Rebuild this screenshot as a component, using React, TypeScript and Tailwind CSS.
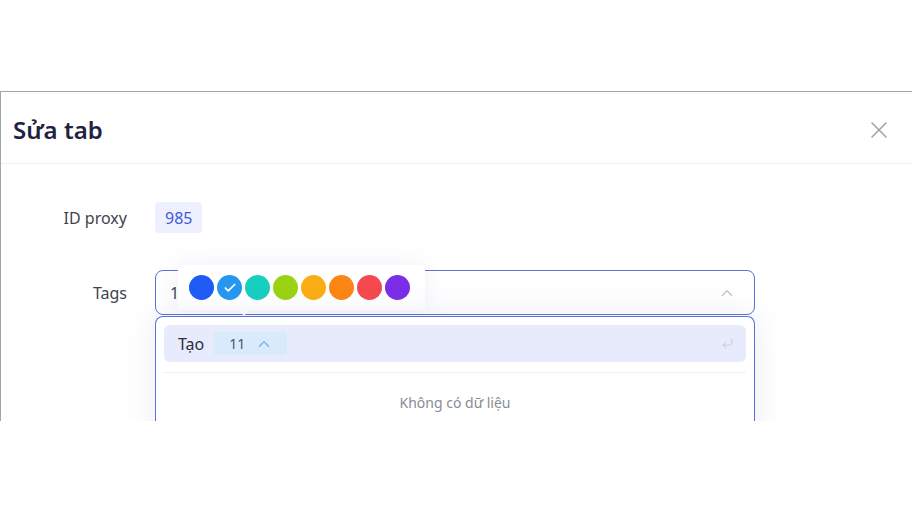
import { Check, ChevronUp, CornerDownLeft, X } from "lucide-react";

const colors = [
  "#1f5bf5",
  "#2697f0",
  "#16cfbf",
  "#9bd214",
  "#fbad15",
  "#fb8613",
  "#f5494f",
  "#7b2ee8",
];

export default function App() {
  return (
    <div
      className="h-[513px] w-[912px] overflow-hidden bg-white"
      style={{ fontFamily: '"Noto Sans", "Open Sans", sans-serif' }}
    >
      <div className="mt-[91px] h-[330px] overflow-hidden border-l border-t border-[#a6a6a6]">
        {/* header */}
        <div className="flex h-[72px] items-center justify-between border-b border-[#f0f0f2] pl-[12px] pr-[19px] pt-[5px]">
          <h2 className="text-[24px] font-semibold text-[#1e2340]">Sửa tab</h2>
          <X size={28} strokeWidth={1.3} className="text-[#a3a3a3]" />
        </div>

        {/* body */}
        <div className="flex flex-col gap-[37px] pt-[38px]">
          <div className="flex items-center">
            <div className="w-[126px] text-right text-[16px] text-[#3f4250]">ID proxy</div>
            <div className="ml-[28px] flex h-[31px] items-center rounded-[4px] bg-[#eef0fd] px-[10px] text-[16px] text-[#3d5bd9]">
              985
            </div>
          </div>

          <div className="flex items-center">
            <div className="w-[126px] text-right text-[16px] text-[#3f4250]">Tags</div>
            <div className="relative ml-[28px] w-[600px]">
              <div className="flex h-[45px] items-center justify-between rounded-[8px] border-[1.5px] border-[#5b70dc] bg-white pl-[14px] pr-[18px]">
                <span className="text-[16px] text-[#3f4250]">1</span>
                <ChevronUp size={18} strokeWidth={2} className="text-[#c4c6cc]" />
              </div>

              {/* colour picker */}
              <div className="absolute left-[23px] top-[-5px] flex h-[45px] items-center gap-[3px] bg-white pl-[11px] pr-[15px] shadow-[0_0_24px_rgba(120,130,200,0.12)]">
                {colors.map((c, i) => (
                  <span
                    key={c}
                    className="flex h-[25px] w-[25px] items-center justify-center rounded-full"
                    style={{ backgroundColor: c }}
                  >
                    {i === 1 ? <Check size={14} strokeWidth={3} className="text-white" /> : null}
                  </span>
                ))}
                <span className="absolute bottom-[-4px] left-[62px] h-[8px] w-[8px] rotate-45 bg-white" />
              </div>

              {/* dropdown */}
              <div className="absolute left-0 top-[46px] h-[140px] w-[600px] rounded-t-[8px] border-[1.5px] border-b-0 border-[#5b70dc] bg-white px-[8px] pt-[8px] shadow-[0_0_30px_rgba(120,130,200,0.15)]">
                <div className="flex h-[37px] items-center justify-between rounded-[6px] bg-[#e8ebfb] pl-[14px] pr-[12px]">
                  <div className="flex items-center gap-[10px]">
                    <span className="text-[16px] text-[#2b2f3d]">Tạo</span>
                    <span className="flex h-[23px] w-[73px] items-center gap-[10px] rounded-[3px] bg-[#d8ebfb] pl-[15px] text-[14px] text-[#4a5578]">
                      11
                      <ChevronUp size={18} strokeWidth={2} className="text-[#7eb6ef]" />
                    </span>
                  </div>
                  <CornerDownLeft size={13} strokeWidth={1.6} className="text-[#c3c6d2]" />
                </div>
                <div className="mt-[10px] border-t border-[#f0f0f3]" />
                <div className="pt-[19px] text-center text-[14px] text-[#8a8c94]">Không có dữ liệu</div>
              </div>
            </div>
          </div>
        </div>
      </div>
    </div>
  );
}
